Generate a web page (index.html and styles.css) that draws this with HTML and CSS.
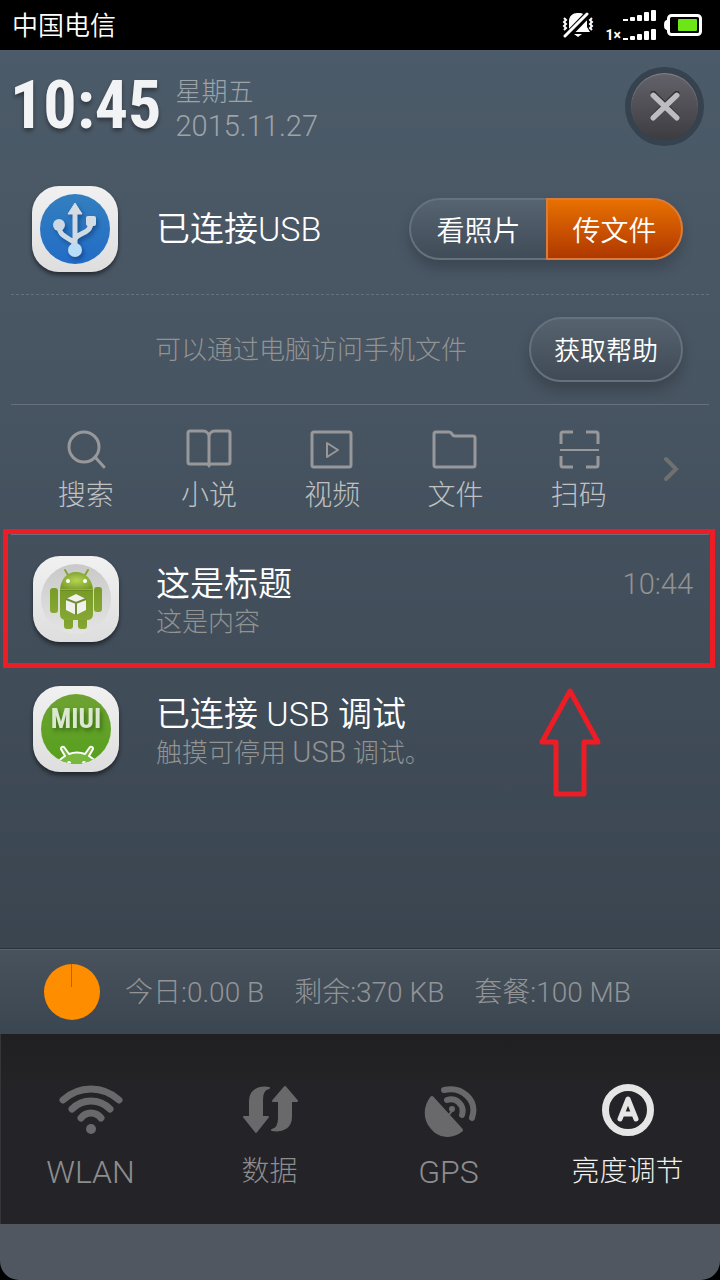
FILE: index.html
```html
<!DOCTYPE html>
<html lang="zh-CN">
<head>
    <meta charset="UTF-8">
    <meta name="viewport" content="width=device-width, initial-scale=1.0">
    <title>通知栏</title>
    <link rel="stylesheet" href="styles.css">
</head>
<body>
    <div class="status-bar">
        <span class="carrier">中国电信</span>
        <div class="status-icons">
            <!-- mute -->
            <svg width="32" height="26" viewBox="0 0 32 26">
                <path d="M7 19V9c0-5 4-8 8-8h3c4 0 7 4 7 8v6l3 5H6z" fill="#fff"/>
                <path d="M12 22h8l-4 3z" fill="#fff"/>
                <path d="M3 26L27 1" stroke="#000" stroke-width="7"/>
                <path d="M3 24L25 2" stroke="#fff" stroke-width="3" stroke-linecap="round"/>
                <path d="M2 6l2 2-2 2 2 2-2 2 2 2-2 2M30 6l-2 2 2 2-2 2 2 2-2 2 2 2" fill="none" stroke="#fff" stroke-width="2"/>
            </svg>
            <div class="signal">
                <span class="net">1×</span>
                <svg width="34" height="31" viewBox="0 0 34 31" fill="#fff">
                    <g id="bars">
                        <rect x="0" y="9" width="5" height="2"/>
                        <rect x="7" y="7" width="5" height="4" rx="1"/>
                        <rect x="14" y="5" width="5" height="6" rx="1"/>
                        <rect x="21" y="2" width="5" height="9" rx="1"/>
                        <rect x="28" y="0" width="5" height="11" rx="1"/>
                    </g>
                    <use href="#bars" y="19"/>
                </svg>
            </div>
            <!-- battery -->
            <svg width="38" height="22" viewBox="0 0 38 22">
                <rect x="4.500" y="1.500" width="32" height="19" rx="3" fill="none" stroke="#fff" stroke-width="3"/>
                <path d="M4 5L1 7Q0 8 0 11t1 4l3 2z" fill="#fff"/>
                <rect x="14" y="5" width="19" height="12" rx="1" fill="#6ce617"/>
            </svg>
        </div>
    </div>

    <main class="panel">
        <header class="panel-header">
            <time class="clock">10:45</time>
            <div class="date">
                <div>星期五</div>
                <div class="date-num">2015.11.27</div>
            </div>
            <button class="close" aria-label="关闭">
                <svg width="30" height="30" viewBox="0 0 28 28" fill="none" stroke-width="5" stroke-linecap="round">
                    <path d="M3 2l22 22M25 2L3 24" stroke="#333338"/>
                    <path d="M3 4l22 21M25 4L3 25" stroke="#bdbdbf"/>
                </svg>
            </button>
        </header>

        <section class="usb-row">
            <div class="app-icon">
                <svg width="70" height="70" viewBox="0 0 70 70">
                    <defs>
                        <linearGradient id="blue" x1="0" y1="0" x2="0" y2="1">
                            <stop offset="0" stop-color="#337fbe"/>
                            <stop offset="1" stop-color="#226cc7"/>
                        </linearGradient>
                    </defs>
                    <circle cx="35" cy="35" r="35" fill="url(#blue)"/>
                    <g class="usb-glyph">
                        <path d="M35 56V18M35 50C32 44 19 44 19 32M35 45c4-7 16-5 16-17" fill="none" stroke="#cfdae4" stroke-width="5"/>
                        <path d="M35 9l7 11H28z" fill="#d5dce2" stroke="#d5dce2" stroke-linejoin="round"/>
                        <circle cx="19" cy="31" r="6" fill="#ccd9e4"/>
                        <rect x="46" y="22" width="10" height="10" rx="2" fill="#d2dce4"/>
                        <circle cx="35" cy="56" r="7" fill="#b9dcf7"/>
                    </g>
                </svg>
            </div>
            <h2 class="title">已连接<span class="thin">USB</span></h2>
            <div class="segment">
                <button class="seg">看照片</button>
                <button class="seg seg-on">传文件</button>
            </div>
        </section>

        <section class="help-row">
            <p class="hint">可以通过电脑访问手机文件</p>
            <button class="pill">获取帮助</button>
        </section>

        <nav class="shortcuts">
            <a class="shortcut" href="#">
                <svg width="46" height="42" viewBox="0 0 46 42" class="line">
                    <circle cx="21" cy="19" r="15"/>
                    <path d="M32 29l9 10" stroke-linecap="round"/>
                </svg>
                搜索
            </a>
            <a class="shortcut" href="#">
                <svg width="46" height="42" viewBox="0 0 46 42" class="line">
                    <path d="M23 36H4q-2 0-2-2V5q0-2 2-2h13c4 0 6 3 6 6 0-3 2-6 6-6h13q2 0 2 2v29q0 2-2 2zM23 8v28" stroke-linejoin="round"/>
                    <path d="M20 36h6l-3 4z" fill="#98989a" stroke="none"/>
                </svg>
                小说
            </a>
            <a class="shortcut" href="#">
                <svg width="46" height="42" viewBox="0 0 46 42" class="line">
                    <rect x="3" y="4" width="39" height="35" rx="2"/>
                    <path d="M18 15v14l11-7z" stroke-width="2" stroke-linejoin="round"/>
                </svg>
                视频
            </a>
            <a class="shortcut" href="#">
                <svg width="46" height="42" viewBox="0 0 46 42" class="line">
                    <path d="M4 4h13q2 0 3 2t3 2h18q2 0 2 2v27q0 2-2 2H4q-2 0-2-2V6q0-2 2-2z"/>
                </svg>
                文件
            </a>
            <a class="shortcut" href="#">
                <svg width="46" height="42" viewBox="0 0 46 42" class="line">
                    <path d="M5 16V6q0-2 2-2h10M30 4h10q2 0 2 2v10M42 28v9q0 2-2 2H30M17 39H7q-2 0-2-2v-9"/>
                    <path d="M4 22h39" stroke-width="2"/>
                </svg>
                扫码
            </a>
            <button class="more" aria-label="更多">
                <svg width="16" height="26" viewBox="0 0 16 26">
                    <path d="M3 3l10 10L3 23" fill="none" stroke="#6f706f" stroke-width="4" stroke-linecap="round"/>
                </svg>
            </button>
        </nav>

        <section class="notices">
            <article class="notice">
                <div class="app-icon">
                    <svg width="70" height="70" viewBox="0 0 70 70">
                        <defs>
                            <radialGradient id="head" cx=".5" cy=".5" r=".6">
                                <stop offset="0" stop-color="#b4d455"/>
                                <stop offset="1" stop-color="#799b27"/>
                            </radialGradient>
                            <linearGradient id="torso" x1="0" y1="0" x2="0" y2="1">
                                <stop offset="0" stop-color="#789a27"/>
                                <stop offset="1" stop-color="#86a833"/>
                            </linearGradient>
                            <linearGradient id="disc" x1="0" y1="0" x2="0" y2="1">
                                <stop offset="0" stop-color="#c9c9c9"/>
                                <stop offset="1" stop-color="#e4e4e4"/>
                            </linearGradient>
                        </defs>
                        <circle cx="35" cy="35" r="35" fill="url(#disc)"/>
                        <path d="M27 11l-3-5M44 11l3-5" stroke="#83a62d" stroke-width="2" stroke-linecap="round"/>
                        <path d="M19 25c1-10 7-17 16-17s16 7 17 17z" fill="url(#head)"/>
                        <circle cx="27" cy="17" r="2" fill="#fff"/>
                        <circle cx="44" cy="17" r="2" fill="#fff"/>
                        <g fill="url(#torso)">
                            <rect x="9" y="24" width="8" height="25" rx="3"/>
                            <rect x="53" y="23" width="8" height="25" rx="3"/>
                            <rect x="23" y="49" width="9" height="16" rx="3"/>
                            <rect x="37" y="49" width="9" height="16" rx="3"/>
                            <path d="M19 26h33v24q0 6-6 6H25q-6 0-6-6z"/>
                        </g>
                        <path d="M19 26h33" stroke="#5e7a1c"/>
                        <path d="M35 30l10 5v11l-10 5-10-5V35z" fill="#f0f0ee"/>
                        <path d="M25 35l10 4 10-4M35 39v12" fill="none" stroke="#6f8f30" stroke-width="2"/>
                    </svg>
                </div>
                <div class="notice-text">
                    <h2 class="title">这是标题</h2>
                    <p class="sub">这是内容</p>
                </div>
                <time class="notice-time">10:44</time>
            </article>

            <article class="notice">
                <div class="app-icon">
                    <svg width="70" height="70" viewBox="0 0 70 70">
                        <defs>
                            <clipPath id="round"><circle cx="35" cy="35" r="35"/></clipPath>
                            <linearGradient id="green" x1="0" y1="0" x2="0" y2="1">
                                <stop offset="0" stop-color="#6ea233"/>
                                <stop offset="1" stop-color="#55a01c"/>
                            </linearGradient>
                        </defs>
                        <g clip-path="url(#round)">
                            <rect width="70" height="70" fill="url(#green)"/>
                            <path d="M14 74c1-5 5-9 10-12l-4-7q0-3 3-2l5 7q8-3 16 0l5-7q3-1 3 2l-4 7c5 3 9 7 10 12z" fill="#78b83f" stroke="#fff" stroke-width="2" stroke-linejoin="round"/>
                            <circle cx="28" cy="69" r="2" fill="#fff"/>
                            <circle cx="43" cy="69" r="2" fill="#fff"/>
                        </g>
                        <text x="35" y="34" class="miui">MIUI</text>
                    </svg>
                </div>
                <div class="notice-text">
                    <h2 class="title">已连接 <span class="thin">USB</span> 调试</h2>
                    <p class="sub">触摸可停用 <span class="sub-latin">USB</span> 调试。</p>
                </div>
            </article>

            <!-- red marks over the first notification -->
            <div class="mark-box"></div>
            <svg class="mark-arrow" width="64" height="112" viewBox="0 0 64 112">
                <path d="M32 5L4 56h14v52h28V56h14z" fill="none" stroke="#ee1c25" stroke-width="5" stroke-linejoin="round"/>
            </svg>
        </section>
    </main>

    <section class="traffic">
        <svg width="56" height="56" viewBox="0 0 56 56">
            <circle cx="28" cy="28" r="28" fill="#ff8d00"/>
            <path d="M27.500 0v23" stroke="#a9691c"/>
        </svg>
        <div class="usage">
            <span>今日:0.00 B</span>
            <span>剩余:370 KB</span>
            <span>套餐:100 MB</span>
        </div>
    </section>

    <footer class="toggles">
        <button class="toggle">
            <svg width="66" height="56" viewBox="0 0 66 56" fill="none" stroke="#69696b" stroke-width="7" stroke-linecap="round">
                <path d="M5 18Q17 7 33 7t28 11M14 27q8-8 19-8t19 8M23 36q4-5 10-5t10 5"/>
                <circle cx="33" cy="47" r="5" fill="#69696b" stroke="none"/>
            </svg>
            <span class="latin">WLAN</span>
        </button>
        <button class="toggle">
            <svg width="56" height="56" viewBox="0 0 56 56" fill="#69696b" stroke="#69696b" stroke-width="2" stroke-linejoin="round">
                <path d="M27 6c-5 1-7 6-7 11v18h6L14 50 2 35h6V19C8 10 15 4 27 6z"/>
                <path d="M30 48c5-1 7-6 7-12V19h-6L43 5l12 14h-6v16c0 10-8 15-19 13z"/>
            </svg>
            <span>数据</span>
        </button>
        <button class="toggle">
            <svg width="56" height="56" viewBox="0 0 56 56" fill="none" stroke="#69696b" stroke-width="6" stroke-linecap="round">
                <path d="M11 16l29 32C30 56 18 54 11 45 4 37 4 25 11 16z" fill="#69696b" stroke-width="4" stroke-linejoin="round"/>
                <path d="M23 8c18-4 34 10 28 28M26 18c9-3 18 5 15 15"/>
                <path d="M27 34l4-5" stroke-width="2"/>
                <circle cx="31" cy="27" r="3" fill="#69696b" stroke="none"/>
            </svg>
            <span class="latin">GPS</span>
        </button>
        <button class="toggle toggle-on">
            <svg width="56" height="56" viewBox="0 0 56 56" fill="none" stroke="#e5e5e5">
                <circle cx="28" cy="28" r="22.500" stroke-width="7"/>
                <path d="M20 37l8-20 8 20M23 32h10" stroke-width="5" stroke-linecap="round" stroke-linejoin="round"/>
            </svg>
            <span>亮度调节</span>
        </button>
    </footer>
    <div class="handle"></div>
</body>
</html>
```
FILE: styles.css
```css
* {
    box-sizing: border-box;
}
body {
    margin: 0;
    min-height: 100vh;
    display: flex;
    flex-direction: column;
    background: #000;
    color: #fff;
    font-family: Roboto, "Noto Sans CJK SC", sans-serif;
    font-weight: 300;
    font-size: 26px;
}
h2, p {
    margin: 0;
    font-weight: 300;
}
button {
    border: none;
    background: none;
    padding: 0;
    color: inherit;
    font: inherit;
    cursor: pointer;
}
svg {
    display: block;
    flex: none;
}

/* status bar */
.status-bar {
    height: 50px;
    display: flex;
    align-items: center;
    justify-content: space-between;
    padding: 0 18px 0 12px;
}
.carrier {
    font-weight: 350;
    padding-bottom: 4px;
}
.status-icons {
    display: flex;
    align-items: center;
    gap: 7px;
}
.status-icons .signal {
    display: flex;
    align-items: flex-end;
    gap: 2px;
    margin-left: 5px;
}
.net {
    font-size: 14px;
    line-height: 12px;
    font-weight: 700;
}

/* panel */
.panel {
    flex: 1;
    background: linear-gradient(#4c5b69, #475461 40%, #3a4550);
}
.panel-header {
    display: flex;
    align-items: center;
    height: 112px;
    padding: 0 16px 0 10px;
}
.clock {
    font-family: "Liberation Sans Narrow", "Roboto Condensed", Roboto, sans-serif;
    font-weight: 700;
    font-size: 66px;
    line-height: 80px;
    color: #f2f3f4;
    text-shadow: 0 3px 4px rgba(0, 0, 0, 0.4);
}
.date {
    flex: 1;
    margin-left: 14px;
    padding-top: 6px;
    color: #9ca3a9;
    line-height: 34px;
}
.date-num {
    font-size: 29px;
}
.close {
    width: 79px;
    height: 79px;
    border: 6px solid #36424e;
    border-radius: 50%;
    background: linear-gradient(#63626a, #3d3c41);
    box-shadow: inset 0 1px 1px #85858b;
    display: flex;
    align-items: center;
    justify-content: center;
}

.usb-row {
    display: flex;
    align-items: center;
    height: 132px;
    padding: 2px 37px 0 32px;
}
.usb-row .title {
    flex: 1;
}
.app-icon {
    flex: none;
    width: 86px;
    height: 86px;
    margin-right: 38px;
    border-radius: 27px;
    background: linear-gradient(#f1f1f1, #dedede);
    box-shadow: 0 3px 4px rgba(0, 0, 0, 0.5);
    display: flex;
    align-items: center;
    justify-content: center;
}
.usb-glyph {
    filter: drop-shadow(2px 3px 2px rgba(0, 30, 80, 0.4));
}
.miui {
    font: 700 27px "Liberation Sans Narrow", "Roboto Condensed", Roboto, sans-serif;
    text-anchor: middle;
    fill: #dbe8cf;
    filter: drop-shadow(2px 3px 2px rgba(20, 60, 0, 0.5));
}
.title {
    font-size: 34px;
    font-weight: 350;
    line-height: 40px;
}
.thin {
    font-weight: 300;
}
.segment {
    display: flex;
    height: 62px;
    border-radius: 31px;
    box-shadow: 0 8px 14px rgba(0, 0, 0, 0.2);
}
.seg {
    width: 137px;
    font-size: 28px;
    font-weight: 350;
    border: 2px solid #65717c;
    border-right: none;
    border-radius: 31px 0 0 31px;
    background: linear-gradient(#566370, #404c58);
}
.seg-on {
    border: 2px solid #dc7b37;
    border-radius: 0 31px 31px 0;
    background: linear-gradient(#ea7200, #ad3600) border-box;
}

.help-row {
    display: flex;
    align-items: center;
    justify-content: space-between;
    height: 111px;
    margin: 0 11px;
    padding: 0 26px 0 144px;
    border-top: 1px dashed #64717d;
    border-bottom: 1px solid #64717d;
}
.hint, .sub {
    color: #929393;
}
.hint {
    padding-bottom: 4px;
}
.pill {
    width: 154px;
    height: 65px;
    border: 2px solid #65717c;
    border-radius: 33px;
    background: linear-gradient(#56636e, #404a57);
    box-shadow: 0 8px 14px rgba(0, 0, 0, 0.2);
    font-weight: 350;
    padding-bottom: 3px;
}

/* shortcuts */
.shortcuts {
    display: grid;
    grid-template-columns: repeat(5, 2fr) 1fr;
    height: 129px;
    padding: 23px 18px 0 24px;
}
.shortcut {
    display: flex;
    flex-direction: column;
    align-items: center;
    gap: 6px;
    font-size: 28px;
    line-height: 40px;
    color: #bfc1c2;
    text-decoration: none;
}
.line {
    fill: none;
    stroke: #98989a;
    stroke-width: 3;
}
.more {
    display: flex;
    align-items: center;
    justify-content: center;
    height: 82px;
}

/* notifications */
.notices {
    position: relative;
}
.notices::before {
    content: "";
    display: block;
    height: 1px;
    margin: 0 11px -1px;
    background: #64717d;
}
.notice {
    display: flex;
    align-items: center;
    height: 130px;
    padding: 0 27px 0 33px;
}
.notice .app-icon {
    margin-right: 37px;
}
.notice-text {
    flex: 1;
    padding-top: 6px;
}
.notice .sub {
    line-height: 36px;
}
.sub-latin {
    font-size: 29px;
}
.notice-time {
    align-self: flex-start;
    margin-top: 33px;
    font-size: 29px;
    line-height: 34px;
    color: #929393;
}
.mark-box {
    position: absolute;
    top: -5px;
    left: 3px;
    right: 5px;
    height: 139px;
    border: 5px solid #ee1c25;
}
.mark-arrow {
    position: absolute;
    top: 152px;
    right: 118px;
}

/* data usage */
.traffic {
    display: flex;
    align-items: center;
    height: 86px;
    padding: 0 44px;
    border-top: 1px solid #2a333c;
    background: linear-gradient(#49525c, #3a4651);
    box-shadow: inset 0 1px #59646e;
    font-size: 28px;
    color: #929496;
}
.usage {
    display: flex;
    gap: 30px;
    margin-left: 25px;
    padding-bottom: 4px;
}

/* toggles */
.toggles {
    display: grid;
    grid-template-columns: repeat(4, 1fr);
    height: 190px;
    padding-right: 3px;
    background: linear-gradient(#202021, #242428 30%);
    border-left: 1px solid #35353a;
}
.toggle {
    display: flex;
    flex-direction: column;
    align-items: center;
    padding-top: 48px;
    gap: 13px;
    font-size: 28px;
    line-height: 42px;
    color: #8d8d8f;
}
.toggle-on {
    color: #f0f0f0;
}
.latin {
    font-size: 32px;
}
.handle {
    height: 56px;
    border-radius: 0 0 19px 19px;
    background: #505761;
}
```
